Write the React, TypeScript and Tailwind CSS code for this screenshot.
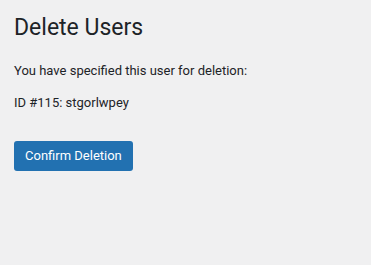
export default function App() {
  return (
    <div className="min-h-screen bg-[#f0f0f1] px-[14px] pt-[11px] text-[#1d2327] [font-family:Roboto,'Liberation_Sans',sans-serif]">
      <h1 className="text-[23px] leading-[1.3] font-normal py-[2px]">Delete Users</h1>
      <p className="mt-[16px] text-[13px] leading-[1.5]">You have specified this user for deletion:</p>
      <p className="mt-[13px] text-[13px] leading-[1.5]">ID #115: stgorlwpey</p>
      <div className="mt-[28px]">
        <button className="h-[30px] rounded-[3px] bg-[#2271b1] px-[11px] text-[13px] text-white">
          Confirm Deletion
        </button>
      </div>
    </div>
  );
}
